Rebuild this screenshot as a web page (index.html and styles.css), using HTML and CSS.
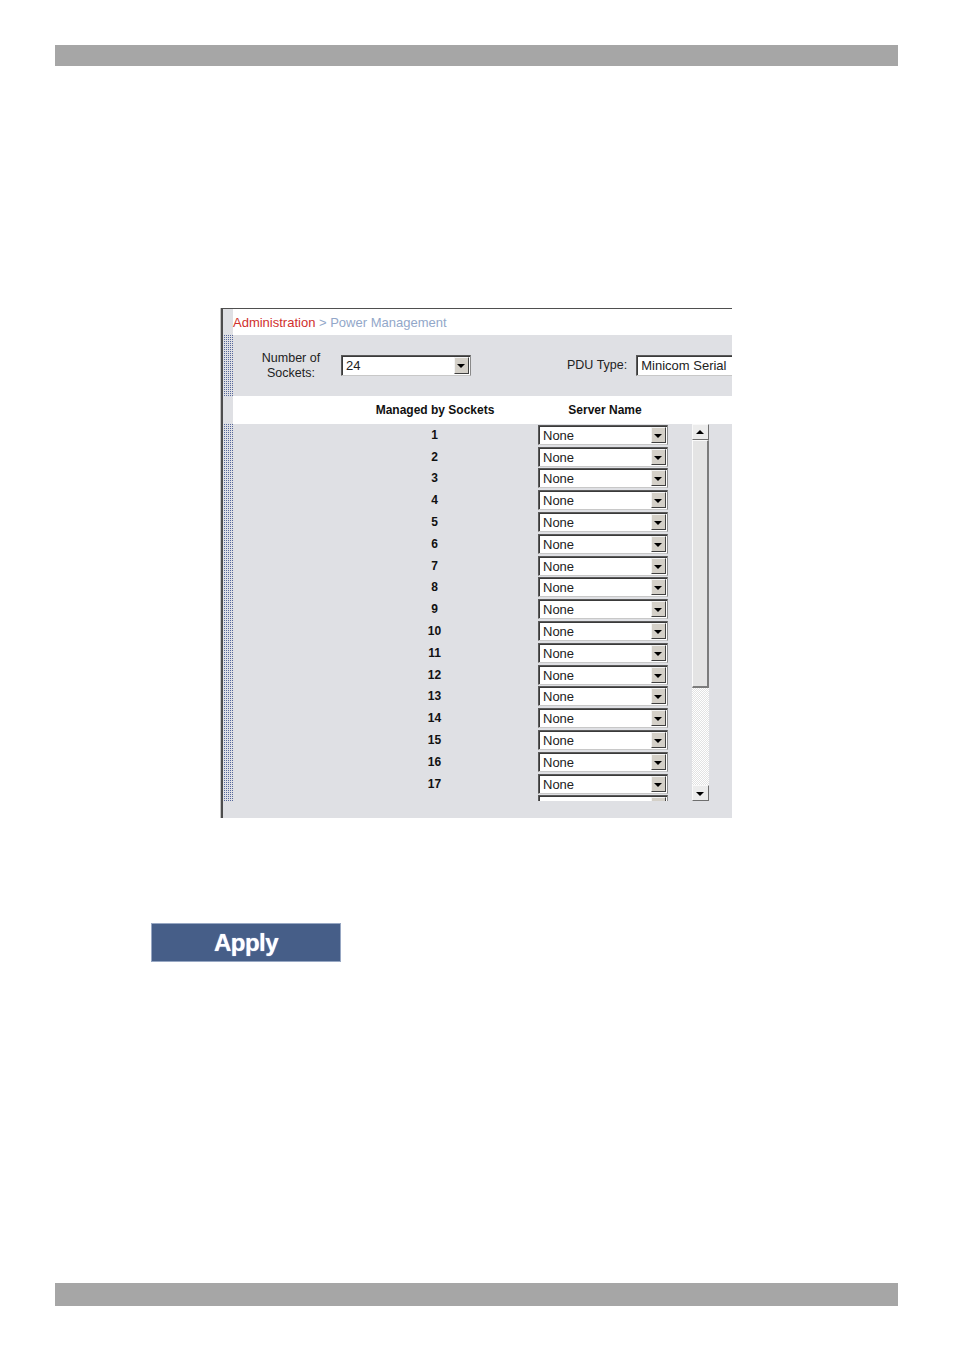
FILE: index.html
```html
<!DOCTYPE html>
<html lang="en">
<head>
  <meta charset="UTF-8">
  <title>Power Management</title>
  <link rel="stylesheet" href="styles.css">
</head>
<body>
<div class="page">
  <div class="rule"></div>

  <div class="panel">
    <div class="frame">
      <!--面包屑-->
      <div class="sect crumb">
        <div class="strip"></div>
        <div class="body"><span class="red">Administration</span> &gt; Power Management</div>
      </div>

      <!--设置-->
      <div class="sect settings">
        <div class="strip dots"></div>
        <div class="body">
          <div class="lbl">Number of<br>Sockets:</div>
          <div class="combo tall sock"><span>24</span><i></i></div>
          <div class="lbl pdu">PDU Type:</div>
          <div class="combo tall type"><span>Minicom Serial</span><i></i></div>
        </div>
      </div>

      <!--表头-->
      <div class="sect head">
        <div class="strip"></div>
        <div class="body">
          <div class="h1">Managed by Sockets</div>
          <div class="h2">Server Name</div>
        </div>
      </div>

      <!--列表-->
      <div class="sect list">
        <div class="strip dots"></div>
        <div class="body">
          <div class="rows">
            <div class="row"><div class="num">1</div><div class="combo"><span>None</span><i></i></div></div>
            <div class="row"><div class="num">2</div><div class="combo"><span>None</span><i></i></div></div>
            <div class="row"><div class="num">3</div><div class="combo"><span>None</span><i></i></div></div>
            <div class="row"><div class="num">4</div><div class="combo"><span>None</span><i></i></div></div>
            <div class="row"><div class="num">5</div><div class="combo"><span>None</span><i></i></div></div>
            <div class="row"><div class="num">6</div><div class="combo"><span>None</span><i></i></div></div>
            <div class="row"><div class="num">7</div><div class="combo"><span>None</span><i></i></div></div>
            <div class="row"><div class="num">8</div><div class="combo"><span>None</span><i></i></div></div>
            <div class="row"><div class="num">9</div><div class="combo"><span>None</span><i></i></div></div>
            <div class="row"><div class="num">10</div><div class="combo"><span>None</span><i></i></div></div>
            <div class="row"><div class="num">11</div><div class="combo"><span>None</span><i></i></div></div>
            <div class="row"><div class="num">12</div><div class="combo"><span>None</span><i></i></div></div>
            <div class="row"><div class="num">13</div><div class="combo"><span>None</span><i></i></div></div>
            <div class="row"><div class="num">14</div><div class="combo"><span>None</span><i></i></div></div>
            <div class="row"><div class="num">15</div><div class="combo"><span>None</span><i></i></div></div>
            <div class="row"><div class="num">16</div><div class="combo"><span>None</span><i></i></div></div>
            <div class="row"><div class="num">17</div><div class="combo"><span>None</span><i></i></div></div>
            <!--第18行被裁掉，只露出边框-->
            <div class="row"><div class="num"></div><div class="combo"><span></span><i></i></div></div>
          </div>
          <div class="sb">
            <div class="sb-btn up"></div>
            <div class="sb-thumb"></div>
            <div class="sb-track"></div>
            <div class="sb-btn down"></div>
          </div>
        </div>
      </div>

      <div class="sect foot">
        <div class="strip"></div>
        <div class="body"></div>
      </div>
    </div>
  </div>

  <div class="apply">Apply</div>

  <div class="rule bottom"></div>
</div>
</body>
</html>
```

FILE: styles.css
```css
* {
  padding: 0;
  margin: 0;
  box-sizing: border-box;
}

body {
  background: #fff;
  font-family: "Liberation Sans", Arial, sans-serif;
  color: #1a1a1a;
}

.page {
  padding-top: 45px;
}

.rule {
  height: 21px;
  margin: 0 56px 0 55px;
  background: #a6a6a6;
}

.rule.bottom {
  height: 23px;
  margin-top: 321px;
}

/* 面板 */
.panel {
  width: 512px;
  height: 510px;
  margin: 242px 0 0 220px;
  border-left: 1px solid #c4c4c4;
  overflow: hidden;
}

.frame {
  height: 100%;
  border-top: 1px solid #4f4f4f;
  border-left: 2px solid #4d4d4d;
}

.sect {
  display: flex;
}

.strip {
  width: 10px;
  flex: none;
  background: #dfe0e4;
}

.strip.dots {
  background-color: #dfe0e4;
  background-image: conic-gradient(at 1px 1px, #dfe0e4 270deg, #56679a 0);
  background-size: 2px 2px;
  background-position: 1px 0;
  background-clip: content-box;
  padding-left: 1px;
}

.body {
  flex: 1;
  min-width: 0;
}

.crumb {
  height: 26px;
  background: #fff;
}

.crumb .body {
  font-size: 13px;
  line-height: 27px;
  color: #92a7c9;
  white-space: nowrap;
}

.crumb .red {
  color: #d0302c;
}

.settings {
  height: 61px;
  background: #dfe0e4;
}

.settings .body {
  display: flex;
  align-items: center;
  font-size: 12.5px;
  color: #222;
}

.lbl {
  width: 62px;
  margin-left: 27px;
  text-align: center;
  line-height: 15px;
  flex: none;
}

.lbl.pdu {
  width: auto;
  margin-left: 96px;
}

.combo.sock {
  margin-left: 19px;
}

.combo.type {
  margin-left: 9px;
}

.head {
  height: 28px;
  background: #fff;
}

.head .body {
  display: flex;
  align-items: center;
  font-size: 12px;
  font-weight: bold;
  color: #111;
  white-space: nowrap;
}

.h1 {
  width: 134px;
  margin-left: 135px;
  text-align: center;
}

.h2 {
  width: 136px;
  margin-left: 35px;
  text-align: center;
}

/* 列表 */
.list {
  height: 377px;
  background: #dfe0e4;
}

.list .body {
  display: flex;
  overflow: hidden;
}

.rows {
  width: 435px;
  flex: none;
}

.row {
  height: 21.8px;
  display: flex;
  align-items: center;
}

.num {
  width: 20px;
  margin-left: 192px;
  text-align: center;
  font-size: 12px;
  font-weight: bold;
  color: #111;
}

.row .combo {
  margin-left: 94px;
}

/* 下拉框 */
.combo {
  width: 130px;
  height: 20px;
  flex: none;
  display: flex;
  background: #fff;
  border: 1px solid #5a5a5a;
  border-right-color: #8a8a8a;
  border-bottom-color: #c8c8c8;
  box-shadow: inset 1px 1px 0 #3a3a3a;
  font-size: 13px;
  color: #222;
}

.combo.tall {
  height: 21px;
}

.combo span {
  flex: 1;
  padding-left: 4px;
  line-height: 19px;
  white-space: nowrap;
  overflow: hidden;
}

.combo.tall span {
  line-height: 20px;
}

.combo i {
  width: 15px;
  margin: 1px 1px 1px 0;
  flex: none;
  position: relative;
  background: #d4d0c8;
  border: 1px solid;
  border-color: #f4f4f4 #404040 #404040 #f4f4f4;
}

.combo i::after {
  content: "";
  position: absolute;
  left: 2px;
  top: 6px;
  border-style: solid;
  border-width: 4px 4px 0;
  border-color: #000 transparent transparent;
}

.combo.type i {
  display: none;
}

/* 滚动条 */
.sb {
  width: 17px;
  height: 377px;
  margin-left: 24px;
  flex: none;
  display: flex;
  flex-direction: column;
}

.sb-btn {
  height: 16px;
  flex: none;
  position: relative;
  background: #ececec;
  border: 1px solid;
  border-color: #f8f8f8 #6e6e6e #6e6e6e #f8f8f8;
}

.sb-btn::after {
  content: "";
  position: absolute;
  left: 3px;
  border-style: solid;
  border-color: transparent;
}

.sb-btn.up::after {
  top: 5px;
  border-width: 0 4px 4px;
  border-bottom-color: #000;
}

.sb-btn.down::after {
  top: 6px;
  border-width: 4px 4px 0;
  border-top-color: #000;
}

.sb-thumb {
  height: 248px;
  flex: none;
  background: #e4e4e4;
  border-top: 1px solid #fafafa;
  border-left: 1px solid #fafafa;
  border-right: 2px solid #7c7c7c;
  border-bottom: 2px solid #7c7c7c;
}

.sb-track {
  flex: 1;
  background-color: #fff;
  background-image: conic-gradient(#e2e2e2 25%, #fff 0 50%, #e2e2e2 0 75%, #fff 0);
  background-size: 2px 2px;
}

.foot {
  height: 17px;
  background: #dfe0e4;
}

/* 应用按钮 */
.apply {
  width: 190px;
  height: 39px;
  margin: 105px 0 0 151px;
  background: #465e88;
  border: 1px solid #97a7c3;
  color: #fff;
  font-size: 24px;
  font-weight: bold;
  line-height: 37px;
  text-align: center;
  letter-spacing: -0.5px;
  text-shadow: 0 0 1px #c9d6ff;
}
```
